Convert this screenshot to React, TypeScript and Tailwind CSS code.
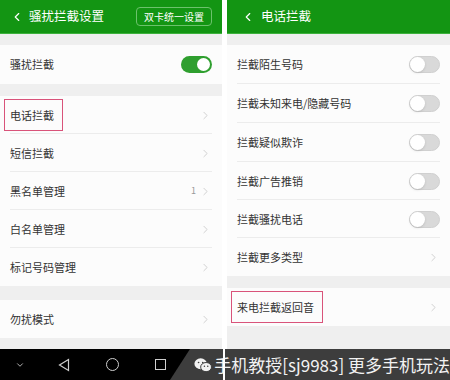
import { ChevronLeft, ChevronRight, ChevronDown } from "lucide-react";

const font = { fontFamily: '"Noto Sans CJK SC", "Noto Sans", sans-serif' };

// 开关
const Toggle = ({ on }: { on?: boolean }) => (
  <div
    className={
      on
        ? "flex h-[17px] w-[31px] items-center justify-end rounded-full bg-[#2f9f2f] px-[2px]"
        : "flex h-[17px] w-[31px] items-center justify-start rounded-full border border-[#d0d0d0] bg-[#d9d9d9]"
    }
  >
    <div className={on ? "h-[13px] w-[13px] rounded-full bg-white" : "h-[15px] w-[15px] rounded-full bg-white shadow-sm"} />
  </div>
);

const Arrow = () => <ChevronRight size={13} strokeWidth={1.4} className="text-[#c4c4c4]" />;

const Row = ({
  label,
  right,
  divider = true,
  boxed,
  h = "h-[38px]",
}: {
  label: string;
  right: React.ReactNode;
  divider?: boolean;
  boxed?: boolean;
  h?: string;
}) => (
  <div className={`relative flex ${h} items-center bg-[#fcfcfc] pl-[10px] pr-[10px]`}>
    <span
      className={
        boxed
          ? "-ml-[6px] flex h-[32px] items-center border border-[#d9537a] pl-[5px] pr-[8px] text-[11px] text-[#333]"
          : "text-[11px] text-[#333]"
      }
    >
      {label}
    </span>
    <div className="ml-auto flex items-center gap-[3px]">{right}</div>
    {divider && <div className="absolute bottom-0 left-[10px] right-[10px] h-px bg-[#ececec]" />}
  </div>
);

const Band = ({ h }: { h: string }) => <div className={`${h} bg-[#efefef]`} />;

export default function App() {
  return (
    <div className="relative flex h-[380px] w-[450px] overflow-hidden bg-white" style={font}>
      {/* 左边：骚扰拦截设置 */}
      <div className="flex w-[222px] flex-col">
        <div className="flex h-[34px] items-center border-b border-[#3cb13c] bg-[#139513] pl-[10px] pr-[10px] text-white">
          <ChevronLeft size={14} strokeWidth={2} />
          <span className="ml-[5px] text-[12.5px]">骚扰拦截设置</span>
          <span className="ml-auto rounded-[4px] border border-[#6cc26c] px-[7px] py-[1px] text-[10px]">双卡统一设置</span>
        </div>
        <Band h="h-[11px]" />
        <Row label="骚扰拦截" right={<Toggle on />} divider={false} h="h-[39px]" />
        <Band h="h-[12px]" />
        <Row label="电话拦截" right={<Arrow />} boxed />
        <Row label="短信拦截" right={<Arrow />} />
        <Row label="黑名单管理" right={<><span className="text-[9px] text-[#999]">1</span><Arrow /></>} />
        <Row label="白名单管理" right={<Arrow />} />
        <Row label="标记号码管理" right={<Arrow />} divider={false} />
        <Band h="h-[14px]" />
        <Row label="勿扰模式" right={<Arrow />} divider={false} />
        <Band h="h-[11px]" />
        <div className="flex h-[31px] items-center bg-black text-[#cfcfcf]">
          <ChevronDown size={10} strokeWidth={2} className="ml-[15px]" />
          <svg width="12" height="14" viewBox="0 0 12 14" className="ml-[33px]">
            <path d="M10.5 1.5 L1.5 7 L10.5 12.5 Z" fill="none" stroke="currentColor" strokeWidth="1.2" />
          </svg>
          <div className="ml-[36px] h-[13px] w-[13px] rounded-full border-[1.3px] border-[#cfcfcf]" />
          <div className="ml-[36px] h-[11px] w-[11px] border-[1.3px] border-[#cfcfcf]" />
        </div>
      </div>

      <div className="w-[5px] bg-white" />

      {/* 右边：电话拦截 */}
      <div className="flex flex-1 flex-col">
        <div className="flex h-[34px] items-center border-b border-[#3cb13c] bg-[#139513] pl-[14px] text-white">
          <ChevronLeft size={14} strokeWidth={2} />
          <span className="ml-[6px] text-[12.5px]">电话拦截</span>
        </div>
        <Band h="h-[11px]" />
        <Row label="拦截陌生号码" right={<Toggle />} h="h-[39px]" />
        <Row label="拦截未知来电/隐藏号码" right={<Toggle />} h="h-[39px]" />
        <Row label="拦截疑似欺诈" right={<Toggle />} h="h-[39px]" />
        <Row label="拦截广告推销" right={<Toggle />} h="h-[38px]" />
        <Row label="拦截骚扰电话" right={<Toggle />} h="h-[38px]" />
        <Row label="拦截更多类型" right={<Arrow />} divider={false} h="h-[38px]" />
        <Band h="h-[12px]" />
        <Row label="来电拦截返回音" right={<Arrow />} divider={false} boxed />
        <Band h="h-[23px]" />
        <div className="h-[31px] bg-black" />
      </div>

      {/* 水印 */}
      <div className="absolute bottom-0 left-[170px] right-0 flex h-[31px] items-center bg-[#3d3d3d] pl-[24px] text-[#f2f2f2] [clip-path:polygon(20px_0,100%_0,100%_100%,0_100%)]">
        <svg width="22" height="18" viewBox="0 0 22 18">
          <ellipse cx="8" cy="7.5" rx="7.5" ry="6.5" fill="#f2f2f2" />
          <ellipse cx="14.5" cy="11.5" rx="6.5" ry="5.5" fill="#f2f2f2" stroke="#3d3d3d" strokeWidth="1.2" />
          <circle cx="5.5" cy="6" r="1" fill="#3d3d3d" />
          <circle cx="10.5" cy="6" r="1" fill="#3d3d3d" />
          <circle cx="12.5" cy="10.5" r="0.9" fill="#3d3d3d" />
          <circle cx="16.5" cy="10.5" r="0.9" fill="#3d3d3d" />
        </svg>
        <span className="ml-[2px] whitespace-nowrap text-[17px] leading-none">手机教授[sj9983] 更多手机玩法</span>
      </div>
      <div className="absolute bottom-0 left-[223px] h-[31px] w-[2px] bg-white" />
    </div>
  );
}
